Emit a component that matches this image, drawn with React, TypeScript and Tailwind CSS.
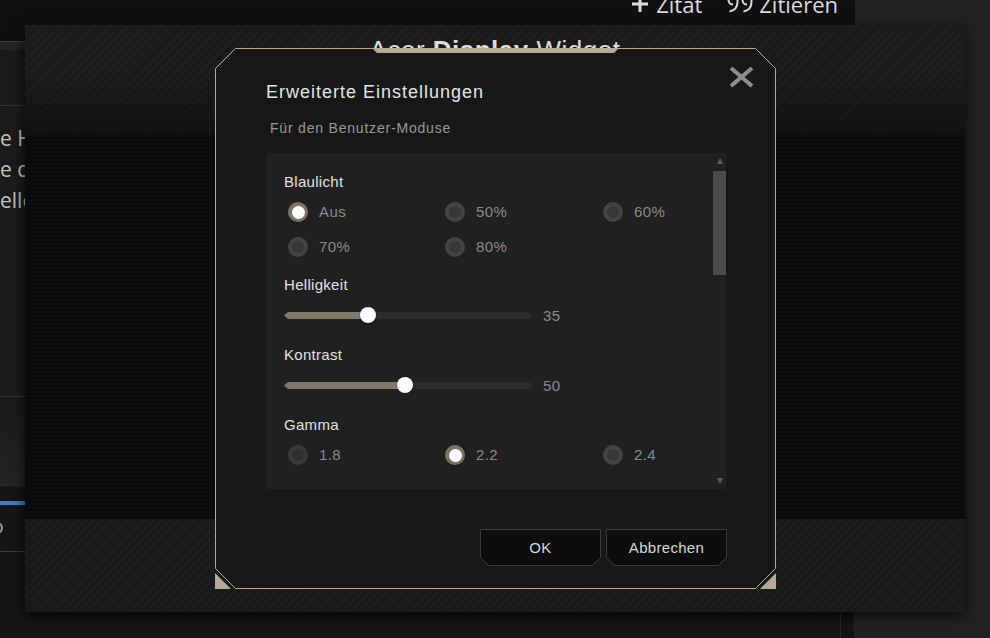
import clsx from "clsx";

const blaulicht = [
	{ label: "Aus", checked: true },
	{ label: "50%" },
	{ label: "60%" },
	{ label: "70%" },
	{ label: "80%" },
];

const gamma = [{ label: "1.8", dim: true }, { label: "2.2", checked: true }, { label: "2.4" }];

const sliders = [
	{ label: "Helligkeit", value: 35, pos: 84 },
	{ label: "Kontrast", value: 50, pos: 121 },
];

function Radio({ label, checked, dim }: { label: string; checked?: boolean; dim?: boolean }) {
	return (
		<div className="flex items-center gap-[11px]">
			<span
				className={clsx(
					"flex h-5 w-5 items-center justify-center rounded-full",
					checked ? "bg-[#7a7465]" : dim ? "bg-[#3a3a3a]" : "bg-[#444444]",
				)}
			>
				<span
					className={clsx(
						"rounded-full",
						checked ? "h-[13px] w-[13px] bg-white" : "h-3 w-3",
						!checked && (dim ? "bg-[#303030]" : "bg-[#383838]"),
					)}
				/>
			</span>
			<span className="text-[15px] leading-5 tracking-[0.4px] text-[#8a8a8a]">{label}</span>
		</div>
	);
}

function Slider({ value, pos }: { value: number; pos: number }) {
	return (
		<div className="flex h-4 items-center">
			<div className="relative h-4 w-[249px]">
				<div className="absolute inset-x-0 top-[5px] h-[7px] bg-[#2c2c2c] [clip-path:polygon(4px_0,calc(100%-4px)_0,100%_50%,calc(100%-4px)_100%,4px_100%,0_50%)]" />
				<div
					className="absolute left-0 top-[5px] h-[7px] bg-[#7d7a6b] [clip-path:polygon(4px_0,100%_0,100%_100%,4px_100%,0_50%)]"
					style={{ width: pos }}
				/>
				<span
					className="absolute top-0 -ml-2 h-4 w-4 rounded-full bg-white shadow-[0_0_2px_rgba(0,0,0,0.5)]"
					style={{ left: pos }}
				/>
			</div>
			<span className="ml-[10px] mt-[2px] text-[15px] leading-4 tracking-[0.4px] text-[#8a8a8a]">{value}</span>
		</div>
	);
}

function SectionLabel({ children }: { children: string }) {
	return <div className="text-[15px] leading-5 tracking-[0.3px] text-[#e2e2e2]">{children}</div>;
}

function DialogButton({ children }: { children: string }) {
	return (
		<button type="button" className="relative flex h-[37px] w-[121px] items-center justify-center">
			<svg className="absolute inset-0" width="121" height="37" viewBox="0 0 121 37">
				<path
					d="M0.5 0.5H120.5V28.5L112.5 36.5H8.5L0.5 28.5Z"
					fill="#0d0d0d"
					stroke="#3c3c3c"
				/>
			</svg>
			<span className="relative text-[15px] leading-5 tracking-[0.3px] text-[#d6d6d6]">{children}</span>
		</button>
	);
}

function PlusIcon() {
	return (
		<svg width="18" height="18" viewBox="0 0 18 18" fill="none" stroke="#dcdcdc" strokeWidth="3">
			<path d="M9 1V17M1 9H17" />
		</svg>
	);
}

function QuoteIcon() {
	return (
		<svg width="27" height="18" viewBox="0 0 27 18" fill="none" stroke="#dcdcdc" strokeWidth="2">
			<path d="M6 9.5a4.5 4.5 0 1 1 4.5-4.5v2c0 5-3 8.5-8 9.5" />
			<path d="M20 9.5a4.5 4.5 0 1 1 4.5-4.5v2c0 5-3 8.5-8 9.5" />
		</svg>
	);
}

export default function App() {
	return (
		<div className="relative h-[638px] w-[990px] overflow-hidden bg-[#161616] font-['Liberation_Sans',Arial,sans-serif]">
			{/* page behind */}
			<div className="flex h-full">
				<div className="flex w-[855px] flex-col">
					<div className="flex h-[41px] shrink-0 items-start justify-end bg-[#101010] pr-[17px]">
						<div className="-mt-[10px] flex items-center gap-[25px] font-['Open_Sans',sans-serif] text-[22px] leading-[28px] text-[#dcdcdc]">
							<span className="flex items-center gap-[7px]">
								<PlusIcon />
								Zitat
							</span>
							<span className="flex items-center gap-[5px]">
								<QuoteIcon />
								Zitieren
							</span>
						</div>
					</div>
					<div className="flex flex-1">
						<div className="flex w-[840px] flex-col">
							<div className="h-[9px] border-t border-[#3a3a3a] bg-[#242424]" />
							<div className="h-[56px] border-b border-[#333333] bg-[#1a1a1a]" />
							<div className="h-[291px] border-b border-[#333333] bg-[#1b1b1b] pt-[17px] font-['Open_Sans',sans-serif] text-[21px] leading-[31px] text-[#c4c4c4]">
								<div>e Helligkeit</div>
								<div>e des Monitors</div>
								<div>ellen</div>
							</div>
							<div className="h-[89px] border-b border-[#2e2e2e] bg-[linear-gradient(to_bottom,#1b1b1b,#232323)]" />
							<div className="h-[15px]" />
							<div className="h-[4px] bg-[linear-gradient(to_right,#3d7fc6,#5a9fe4)]" />
							<div className="flex h-[47px] items-center border-b border-[#3a3a3a]">
								<span className="-ml-[9px] h-3 w-3 rounded-full border-2 border-[#9a9a9a]" />
							</div>
						</div>
						<div className="w-[15px] border-x border-[#2a2a2a] bg-[#141414]" />
					</div>
				</div>
				<div className="flex-1 bg-[#222222]" />
			</div>

			{/* Acer Display Widget window */}
			<div className="absolute left-[25px] top-[25px] flex h-[587px] w-[940px] flex-col shadow-[0_4px_14px_rgba(0,0,0,0.75)]">
				<div className="flex h-[110px] shrink-0 justify-center bg-[linear-gradient(to_bottom,rgba(0,0,0,0)_45%,rgba(0,0,0,0.35)),repeating-linear-gradient(135deg,#1d1d1d_0px,#1d1d1d_3px,#191919_3px,#191919_6px)] pt-[10px]">
					<div className="text-[26px] leading-[30px] tracking-[0.5px] text-[#dedede]">
						Acer <span className="font-bold">Display</span> Widget
					</div>
				</div>
				<div className="flex-1 bg-[repeating-linear-gradient(to_bottom,#0d0d0d_0px,#0d0d0d_2px,#0a0a0a_2px,#0a0a0a_4px)]" />
				<div className="h-[93px] shrink-0 bg-[repeating-linear-gradient(135deg,#1c1c1c_0px,#1c1c1c_3px,#181818_3px,#181818_6px)]" />
			</div>

			{/* Erweiterte Einstellungen dialog */}
			<div className="absolute left-[215px] top-[48px] h-[541px] w-[561px]">
				<svg className="absolute inset-0" width="561" height="541" viewBox="0 0 561 541">
					<path
						d="M20.5 0.5H540.5L560.5 20.5V520.5L540.5 540.5H20.5L0.5 520.5V20.5Z"
						fill="#171717"
						stroke="#b3ab95"
					/>
					<path d="M157 0H404L399 5H162Z" fill="#b3ab95" />
					<path d="M0 525L16 541H0Z" fill="#b3ab95" />
					<path d="M561 525L545 541H561Z" fill="#b3ab95" />
				</svg>
				<button type="button" className="absolute right-[21px] top-[18px]">
					<svg width="27" height="22" viewBox="0 0 27 22" fill="none" stroke="#8d8d8d" strokeWidth="4">
						<path d="M3 2L24 20M24 2L3 20" />
					</svg>
				</button>
				<div className="relative flex flex-col pl-[51px] pt-[32px]">
					<h2 className="text-[18px] leading-6 tracking-[1px] text-[#e4e4e4]">Erweiterte Einstellungen</h2>
					<p className="ml-1 mt-[15px] text-[14px] leading-[18px] tracking-[0.8px] text-[#9a9a9a]">
						Für den Benutzer-Moduse
					</p>
					<div className="mt-4 flex h-[336px] w-[460px] bg-[#202020]">
						<div className="flex min-w-0 flex-1 flex-col pl-[18px] pt-[19px]">
							<SectionLabel>Blaulicht</SectionLabel>
							<div className="mt-[10px] grid grid-cols-[157px_158px_1fr] gap-y-[15px] pl-1">
								{blaulicht.map((r) => (
									<Radio key={r.label} {...r} />
								))}
							</div>
							{sliders.map((s, i) => (
								<div key={s.label} className={clsx("flex flex-col", i === 0 ? "mt-[18px]" : "mt-[22px]")}>
									<SectionLabel>{s.label}</SectionLabel>
									<div className="mt-3">
										<Slider value={s.value} pos={s.pos} />
									</div>
								</div>
							))}
							<div className="mt-[22px]">
								<SectionLabel>Gamma</SectionLabel>
							</div>
							<div className="mt-[10px] grid grid-cols-[157px_158px_1fr] pl-1">
								{gamma.map((r) => (
									<Radio key={r.label} {...r} />
								))}
							</div>
						</div>
						{/* scrollbar */}
						<div className="flex w-[13px] shrink-0 flex-col items-center pb-[5px] pt-[5px]">
							<span className="h-0 w-0 border-x-[3.5px] border-b-[6px] border-x-transparent border-b-[#5b5b5b]" />
							<span className="mt-[7px] h-[104px] w-[13px] bg-[#4b4b4b]" />
							<span className="flex-1" />
							<span className="h-0 w-0 border-x-[3.5px] border-t-[6px] border-x-transparent border-t-[#5b5b5b]" />
						</div>
					</div>
					<div className="mt-10 flex w-[461px] justify-end gap-[5px]">
						<DialogButton>OK</DialogButton>
						<DialogButton>Abbrechen</DialogButton>
					</div>
				</div>
			</div>
		</div>
	);
}
